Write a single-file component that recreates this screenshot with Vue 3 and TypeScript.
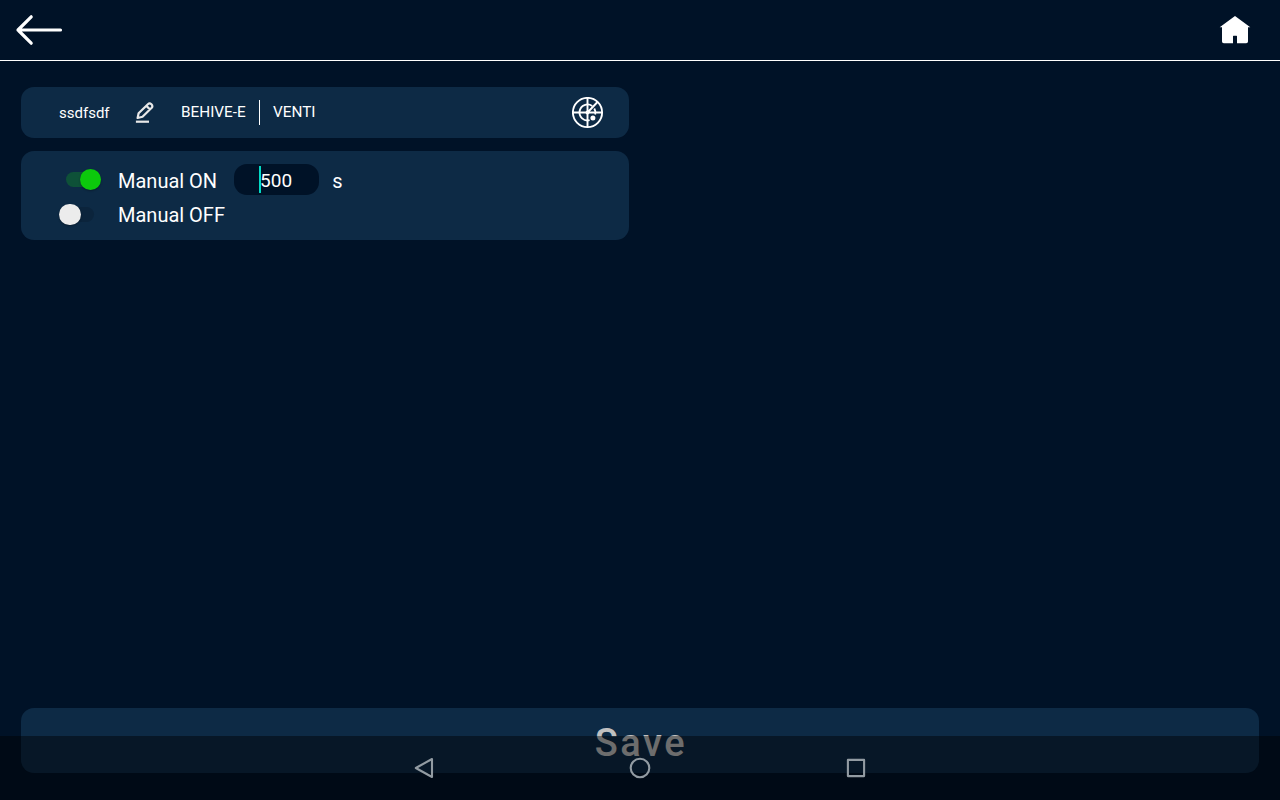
<script setup lang="ts">
import { ref } from 'vue'

const deviceName = ref('ssdfsdf')
const manualOn = ref(true)
const manualOff = ref(false)
const seconds = ref('500')
</script>

<template>
  <div class="screen">
    <header class="topbar">
      <svg class="back" width="48" height="32" viewBox="0 0 48 32">
        <path d="M16.2 2.8L3 16L16.2 29.2M3 16H45.5" />
      </svg>
      <svg class="home" width="32" height="28" viewBox="0 0 32 28">
        <path d="M16 0L31.3 11.3H29V25.5Q29 27.3 27.2 27.3H18V20.2Q18 19.7 17.5 19.7H14.5Q14 19.7 14 20.2V27.3H4.8Q3 27.3 3 25.5V11.3H.7Z" />
      </svg>
    </header>

    <main class="content">
      <section class="card device">
        <span class="name">{{ deviceName }}</span>
        <svg class="edit" width="20" height="22" viewBox="0 0 20 22">
          <path d="M2.6 16L3.6 11.3L12.9 2.2Q14.6 .7 16.4 2.3Q18.1 4 16.7 5.8L7.5 14.8Z M11.4 3.9L14.8 7.3" />
          <path d="M.9 19.7H14" />
        </svg>
        <span class="model">BEHIVE-E</span>
        <span class="divider"></span>
        <span class="kind">VENTI</span>
        <svg class="radar" width="32" height="32" viewBox="0 0 32 32">
          <circle cx="15.5" cy="15.5" r="14.6" />
          <path d="M1 15.5H30M15.5 1V30M15.5 15.5L25.5 5" />
          <path d="M20.2 9A8 8 0 1 0 17.6 23.2M22.3 11.4A8 8 0 0 1 23.2 17.6" />
          <circle class="dot" cx="20.9" cy="21" r="2.5" />
          <circle class="dot" cx="15.5" cy="15.5" r="2" />
        </svg>
      </section>

      <section class="card controls">
        <div class="row">
          <span class="switch" :class="{ on: manualOn }"><i class="thumb"></i></span>
          <span class="label">Manual ON</span>
          <span class="field"><i class="caret"></i>{{ seconds }}</span>
          <span class="unit">s</span>
        </div>
        <div class="row">
          <span class="switch" :class="{ on: manualOff }"><i class="thumb"></i></span>
          <span class="label off-label">Manual OFF</span>
        </div>
      </section>
    </main>

    <button class="save">Save</button>

    <nav class="sysbar">
      <svg width="24" height="24" viewBox="0 0 24 24"><path d="M20 3V21L3.8 12Z" /></svg>
      <svg width="24" height="24" viewBox="0 0 24 24"><circle cx="12" cy="12" r="9.3" /></svg>
      <svg width="24" height="24" viewBox="0 0 24 24"><rect x="3.9" y="3.9" width="16.2" height="16.2" /></svg>
    </nav>
  </div>
</template>

<style>
body {
  background: #001227;
  overflow: hidden;
}
</style>

<style scoped>
.screen {
  position: relative;
  box-sizing: border-box;
  width: 1280px;
  height: 800px;
  padding-bottom: 27px;
  display: flex;
  flex-direction: column;
  overflow: hidden;
  background: #001227;
  color: #fff;
  font-family: Roboto, "Liberation Sans", sans-serif;
}
.topbar {
  box-sizing: border-box;
  height: 61px;
  padding: 0 29px 0 14px;
  display: flex;
  align-items: center;
  justify-content: space-between;
  border-bottom: 1px solid #fff;
}
.back {
  margin-left: 0.5px;
  fill: none;
  stroke: #fff;
  stroke-width: 3.2;
  stroke-linecap: round;
  stroke-linejoin: round;
}
.home {
  fill: #fff;
}
.content {
  flex: 1;
  padding: 26px 21px 0;
  display: flex;
  flex-direction: column;
  gap: 13px;
}
.card {
  box-sizing: border-box;
  width: 608px;
  border-radius: 13px;
  background: #0d2a45;
}
.device {
  height: 51px;
  padding: 0 25px 0 38px;
  display: flex;
  align-items: center;
  font-size: 15px;
  line-height: 18px;
}
.name {
  width: 76px;
  padding-top: 1px;
}
.edit {
  width: 20px;
  margin-right: 26px;
  fill: none;
  stroke: #e8e8e8;
  stroke-width: 2.2;
  stroke-linejoin: round;
}
.model,
.kind {
  padding-bottom: 2px;
  font-size: 15.3px;
}
.model {
  width: 78px;
}
.divider {
  width: 1px;
  height: 25px;
  margin-right: 13px;
  background: #fff;
}
.radar {
  margin-left: auto;
  fill: none;
  stroke: #fff;
  stroke-width: 1.9;
}
.radar .dot {
  fill: #fff;
  stroke: none;
}
.controls {
  height: 89px;
  padding: 12px 0 0 38px;
  display: flex;
  flex-direction: column;
}
.row {
  height: 35px;
  display: flex;
  align-items: center;
  font-size: 20px;
  line-height: 24px;
}
.switch {
  display: flex;
  align-items: center;
  box-sizing: border-box;
  width: 35px;
  height: 15px;
  margin: 0 24px 2px 0;
  border-radius: 8px;
  background: #0b243c;
}
.switch.on {
  width: 35px;
  margin: 0 17px 2px 7px;
  justify-content: flex-end;
  background: #0e5138;
}
.thumb {
  width: 21.5px;
  height: 21.5px;
  flex: none;
  border-radius: 50%;
  background: #ececec;
  box-shadow: 0 1px 2px rgba(0, 0, 0, 0.3);
}
.on .thumb {
  background: #0cc90c;
}
.label {
  padding-top: 1px;
}
.off-label {
  padding: 0 0 1px;
}
.field {
  position: relative;
  box-sizing: border-box;
  width: 85px;
  height: 31px;
  margin: 0 13px 2px 17px;
  padding-right: 1px;
  border-radius: 13px;
  background: #001227;
  font-size: 19px;
  line-height: 33px;
  text-align: center;
}
.caret {
  position: absolute;
  left: 25px;
  top: 2px;
  width: 2px;
  height: 27px;
  background: #03dac5;
}
.unit {
  padding-top: 1px;
}
.save {
  height: 65px;
  margin: 0 21px;
  padding: 4px 0 0 2px;
  border: 0;
  border-radius: 13px;
  background: #0d2a45;
  color: #c0c0c0;
  font: 500 38px/48px Roboto, "Liberation Sans", sans-serif;
  letter-spacing: 2.6px;
}
.sysbar {
  position: absolute;
  left: 0;
  right: 0;
  bottom: 0;
  height: 64px;
  display: flex;
  align-items: center;
  justify-content: center;
  gap: 192px;
  background: rgba(0, 0, 0, 0.43);
}
.sysbar svg {
  fill: none;
  stroke: #929ba2;
  stroke-width: 2.1;
  stroke-linejoin: round;
}
</style>
